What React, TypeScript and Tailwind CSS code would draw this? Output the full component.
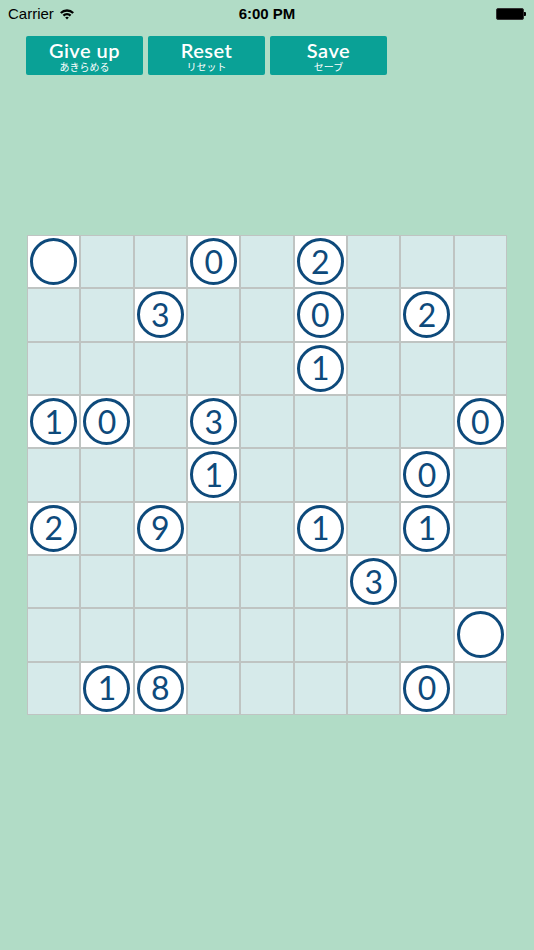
const board: (string | null)[][] = [
  ["o", null, null, "0", null, "2", null, null, null],
  [null, null, "3", null, null, "0", null, "2", null],
  [null, null, null, null, null, "1", null, null, null],
  ["1", "0", null, "3", null, null, null, null, "0"],
  [null, null, null, "1", null, null, null, "0", null],
  ["2", null, "9", null, null, "1", null, "1", null],
  [null, null, null, null, null, null, "3", null, null],
  [null, null, null, null, null, null, null, null, "o"],
  [null, "1", "8", null, null, null, null, "0", null],
];

const buttons = [
  { label: "Give up", sub: "あきらめる" },
  { label: "Reset", sub: "リセット" },
  { label: "Save", sub: "セーブ" },
];

function StatusBar() {
  return (
    <div className="relative flex h-[28px] items-center justify-between px-[8px] text-[15px] text-black">
      <div className="flex items-center gap-[5px]">
        <span>Carrier</span>
        <svg width="16" height="12" viewBox="0 0 16 12">
          <path d="M1 4.2 A10 10 0 0 1 15 4.2 L13.4 5.8 A7.8 7.8 0 0 0 2.6 5.8 Z" fill="#000" />
          <path d="M3.6 6.8 A6.4 6.4 0 0 1 12.4 6.8 L10.8 8.4 A4.2 4.2 0 0 0 5.2 8.4 Z" fill="#000" />
          <path d="M6.2 9.4 A2.8 2.8 0 0 1 9.8 9.4 L8 11.4 Z" fill="#000" />
        </svg>
      </div>
      <span className="absolute left-1/2 -translate-x-1/2 font-semibold">6:00 PM</span>
      <div className="flex items-center">
        <div className="h-[12px] w-[28px] rounded-[2px] border border-[#333] bg-black" />
        <div className="h-[4px] w-[2px] rounded-r-[1px] bg-black" />
      </div>
    </div>
  );
}

function Cell({ v }: { v: string | null }) {
  if (v === null) return <div className="bg-[#d6eaea]" />;
  return (
    <div className="flex items-center justify-center bg-white">
      <div className="flex h-[47px] w-[47px] items-center justify-center rounded-full border-[3px] border-[#0e4a7b] text-[32px] leading-none text-[#0e4a7b] [font-family:Lato,'Noto_Sans',sans-serif]">
        {v === "o" ? "" : v}
      </div>
    </div>
  );
}

export default function App() {
  return (
    <div className="min-h-[950px] w-[534px] bg-[#b1dcc6] [font-family:'Liberation_Sans',Arial,sans-serif]">
      <StatusBar />
      <div className="mt-[8px] flex gap-[5px] pl-[26px]">
        {buttons.map((b) => (
          <div
            key={b.label}
            className="flex h-[39px] w-[117px] flex-col items-center justify-center gap-[1px] rounded-[2px] bg-[#0aa196] text-white"
          >
            <span className="text-[20px] font-semibold leading-[20px] tracking-[0.5px] [font-family:Lato,sans-serif]">
              {b.label}
            </span>
            <span className="text-[10px] leading-[11px] [font-family:'Noto_Sans_CJK_JP',sans-serif]">
              {b.sub}
            </span>
          </div>
        ))}
      </div>
      <div className="ml-[27px] mt-[160px] grid h-[480px] w-[480px] grid-cols-9 grid-rows-9 gap-[2px] bg-[#bfc4c2] p-[1px]">
        {board.flatMap((row, r) =>
          row.map((v, c) => <Cell key={`${r}-${c}`} v={v} />)
        )}
      </div>
    </div>
  );
}
